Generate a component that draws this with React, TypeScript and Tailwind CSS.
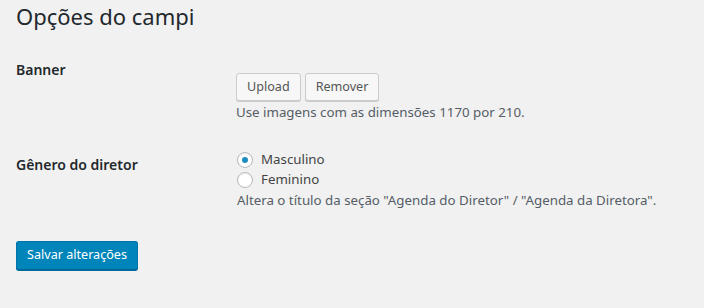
import React from "react";

const font = { fontFamily: '"Noto Sans", "Open Sans", sans-serif' };

function Radio({ checked, label }: { checked?: boolean; label: string }) {
  return (
    <label className="flex items-center h-[20px] text-[13.3px] text-[#444]">
      <span className="w-[16px] h-[16px] rounded-full border border-[#b4b9be] bg-white shadow-[inset_0_1px_2px_rgba(0,0,0,0.07)] flex items-center justify-center mr-[8px]">
        {checked && <span className="w-[6px] h-[6px] rounded-full bg-[#1e8cbe]" />}
      </span>
      {label}
    </label>
  );
}

export default function App() {
  return (
    <div style={font} className="w-[704px] h-[308px] bg-[#f1f1f1] pl-[16px] overflow-hidden">
      <h1 className="text-[22px] leading-[29px] font-normal text-[#23282d] pt-[2px]">Opções do campi</h1>

      <div className="flex mt-[29px]">
        <div className="w-[220px] text-[14px] font-semibold text-[#23282d] leading-[20px]">Banner</div>
        <div className="pt-[13px]">
          <div className="flex gap-[4px]">
            <button className="h-[28px] px-[10px] text-[12.6px] text-[#555] bg-[#f7f7f7] border border-[#ccc] rounded-[3px] shadow-[0_1px_0_#ccc]">Upload</button>
            <button className="h-[28px] px-[10px] text-[12.6px] text-[#555] bg-[#f7f7f7] border border-[#ccc] rounded-[3px] shadow-[0_1px_0_#ccc]">Remover</button>
          </div>
          <p className="text-[13.3px] leading-[20px] text-[#555d66] mt-[1px]">Use imagens com as dimensões 1170 por 210.</p>
        </div>
      </div>

      <div className="flex mt-[28px]">
        <div className="w-[220px] text-[14px] font-semibold text-[#23282d] leading-[20px] pt-[5px]">Gênero do diretor</div>
        <div className="pl-[1px]">
          <Radio checked label="Masculino" />
          <Radio label="Feminino" />
          <p className="text-[13.3px] leading-[20px] text-[#555d66]">Altera o título da seção "Agenda do Diretor" / "Agenda da Diretora".</p>
        </div>
      </div>

      <div className="mt-[31px]">
        <button className="h-[29px] px-[10px] text-[12.6px] text-white bg-[#0085ba] border border-[#0073aa] border-b-[#006799] rounded-[3px] shadow-[0_1px_0_#006799]">Salvar alterações</button>
      </div>
    </div>
  );
}
